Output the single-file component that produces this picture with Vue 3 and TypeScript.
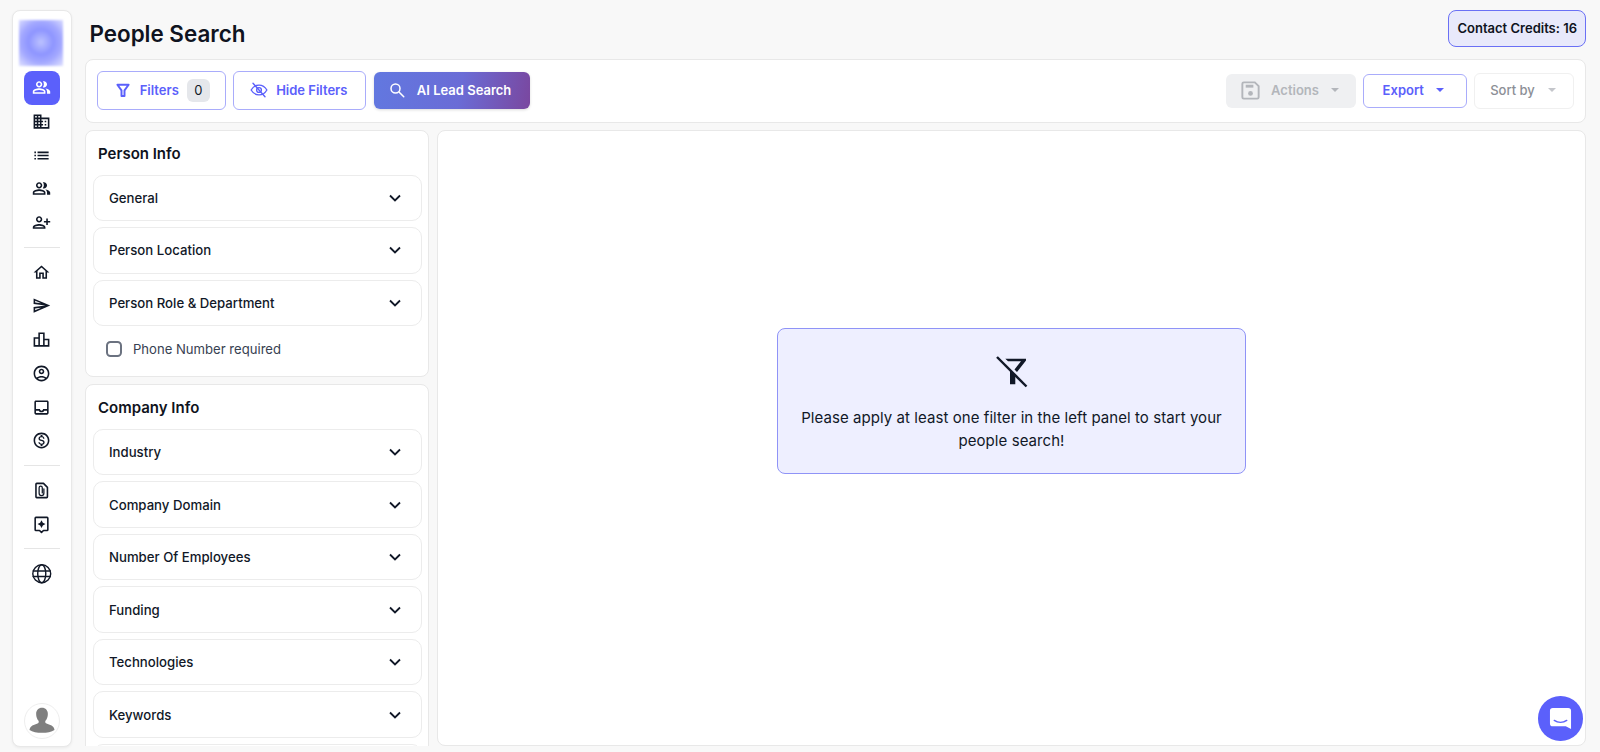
<script setup lang="ts">
interface NavIcon { paths: string[]; flip?: boolean }
const P = {
  people: ['M16.67 13.13C18.04 14.06 19 15.32 19 17v3h4v-3c0-2.18-3.57-3.47-6.33-3.87z','M15 12c2.21 0 4-1.79 4-4s-1.79-4-4-4c-.47 0-.91.1-1.33.24C14.5 5.27 15 6.58 15 8s-.5 2.73-1.33 3.76c.42.14.86.24 1.33.24z','M9 12c2.21 0 4-1.79 4-4s-1.79-4-4-4-4 1.79-4 4 1.79 4 4 4zm0-6c1.1 0 2 .9 2 2s-.9 2-2 2-2-.9-2-2 .9-2 2-2z','M9 13c-2.67 0-8 1.34-8 4v3h16v-3c0-2.66-5.33-4-8-4zm6 5H3v-.99C3.2 16.29 6.3 15 9 15s5.8 1.29 6 2v1z'],
  domain: ['M12 7V3H2v18h20V7H12zM6 19H4v-2h2v2zm0-4H4v-2h2v2zm0-4H4V9h2v2zm0-4H4V5h2v2zm4 12H8v-2h2v2zm0-4H8v-2h2v2zm0-4H8V9h2v2zm0-4H8V5h2v2zm10 12h-8v-2h2v-2h-2v-2h2v-2h-2V9h8v10zm-2-8h-2v2h2v-2zm0 4h-2v2h2v-2z'],
  list: ['M3 13h2v-2H3v2zm0 4h2v-2H3v2zm0-8h2V7H3v2zm4 4h14v-2H7v2zm0 4h14v-2H7v2zM7 7v2h14V7H7z'],
  add: ['M15 12c2.21 0 4-1.79 4-4s-1.79-4-4-4-4 1.79-4 4 1.79 4 4 4zm0-6c1.1 0 2 .9 2 2s-.9 2-2 2-2-.9-2-2 .9-2 2-2zm0 8c-2.67 0-8 1.34-8 4v2h16v-2c0-2.66-5.33-4-8-4zm-6 4c.22-.72 3.31-2 6-2 2.7 0 5.8 1.29 6 2H9zm-3-3v-3h3v-2H6V7H4v3H1v2h3v3h2z'],
  home: ['M12 5.69l5 4.5V18h-2v-6H9v6H7v-7.81l5-4.5M12 3L2 12h3v8h6v-6h2v6h6v-8h3L12 3z'],
  send: ['M4.01 6.03l7.51 3.22-7.52-1 .01-2.22m7.5 8.72L4 17.97v-2.22l7.51-1M2.01 3L2 10l15 2-15 2 .01 7L23 12 2.01 3z'],
  board: ['M16 11V3H8v6H2v12h20V11h-6zm-6-6h4v14h-4V5zm-6 6h4v8H4v-8zm16 8h-4v-6h4v6z'],
  account: ['M12 2C6.48 2 2 6.48 2 12s4.48 10 10 10 10-4.48 10-10S17.52 2 12 2zM7.35 18.5C8.66 17.56 10.26 17 12 17s3.34.56 4.65 1.5c-1.31.94-2.91 1.5-4.65 1.5s-3.34-.56-4.65-1.5zm10.79-1.38C16.45 15.8 14.32 15 12 15s-4.45.8-6.14 2.12C4.7 15.73 4 13.95 4 12c0-4.42 3.58-8 8-8s8 3.58 8 8c0 1.95-.7 3.73-1.86 5.12z','M12 6c-1.93 0-3.5 1.57-3.5 3.5S10.07 13 12 13s3.5-1.57 3.5-3.5S13.93 6 12 6zm0 5c-.83 0-1.5-.67-1.5-1.5S11.17 8 12 8s1.5.67 1.5 1.5S12.83 11 12 11z'],
  inbox: ['M19 3H5c-1.1 0-2 .9-2 2v14c0 1.1.9 2 2 2h14c1.1 0 2-.9 2-2V5c0-1.1-.9-2-2-2zm0 16H5v-3h3.56c.69 1.19 1.97 2 3.45 2s2.75-.81 3.45-2H19v3zm0-5h-4.99c0 1.1-.9 2-2 2s-2-.9-2-2H5V5h14v9z'],
  money: ['M12 2C6.48 2 2 6.48 2 12s4.48 10 10 10 10-4.48 10-10S17.52 2 12 2zm0 18c-4.41 0-8-3.59-8-8s3.59-8 8-8 8 3.59 8 8-3.59 8-8 8zm.31-8.86c-1.77-.45-2.34-.94-2.34-1.67 0-.84.79-1.43 2.1-1.43 1.38 0 1.9.66 1.94 1.64h1.71c-.05-1.34-.87-2.57-2.49-2.97V5H10.9v1.69c-1.51.32-2.72 1.3-2.72 2.81 0 1.79 1.49 2.69 3.66 3.21 1.95.46 2.34 1.15 2.34 1.87 0 .53-.39 1.39-2.1 1.39-1.6 0-2.23-.72-2.32-1.64H8.04c.1 1.7 1.36 2.66 2.86 2.97V19h2.34v-1.67c1.52-.29 2.72-1.16 2.73-2.77-.01-2.2-1.9-2.96-3.66-3.42z'],
}
const groupA: NavIcon[] = [{ paths: P.domain }, { paths: P.list }, { paths: P.people }, { paths: P.add, flip: true }]
const groupB: NavIcon[] = [{ paths: P.home }, { paths: P.send }, { paths: P.board }, { paths: P.account }, { paths: P.inbox }, { paths: P.money }]
const personFilters = ['General', 'Person Location', 'Person Role & Department']
const companyFilters = ['Industry', 'Company Domain', 'Number Of Employees', 'Funding', 'Technologies', 'Keywords']
</script>

<template>
  <div class="page">
    <aside class="sidebar">
      <div class="logo"></div>
      <div class="nav-item active">
        <svg viewBox="0 0 24 24" class="nav-icon"><path v-for="d in P.people" :key="d" :d="d" /></svg>
      </div>
      <div v-for="(ic, i) in groupA" :key="'a' + i" class="nav-item">
        <svg viewBox="0 0 24 24" class="nav-icon" :class="{ flip: ic.flip }"><path v-for="d in ic.paths" :key="d" :d="d" /></svg>
      </div>
      <div class="rule"></div>
      <div v-for="(ic, i) in groupB" :key="'b' + i" class="nav-item">
        <svg viewBox="0 0 24 24" class="nav-icon"><path v-for="d in ic.paths" :key="d" :d="d" /></svg>
      </div>
      <div class="rule"></div>
      <div class="nav-item">
        <svg viewBox="0 0 24 24" class="nav-icon line">
          <path d="M6 3h8.500L19.500 8v12a1 1 0 0 1-1 1H6a1 1 0 0 1-1-1V4a1 1 0 0 1 1-1z" />
          <path class="clip" d="M15 10v5.500a3 3 0 0 1-6 0V8.500a2 2 0 0 1 4 0v6.500" />
        </svg>
      </div>
      <div class="nav-item">
        <svg viewBox="0 0 24 24" class="nav-icon line">
          <path d="M5 3h14a1 1 0 0 1 1 1v14.500a1 1 0 0 1-1 1h-4.500L12 22l-2.500-2.500H5a1 1 0 0 1-1-1V4a1 1 0 0 1 1-1z" />
          <path class="fill" d="M12 6.500l1.700 3.300 3.300 1.700-3.300 1.700-1.700 3.300-1.700-3.300-3.300-1.700 3.300-1.700z" />
        </svg>
      </div>
      <div class="rule"></div>
      <div class="nav-item">
        <svg viewBox="0 0 24 24" class="nav-icon globe line">
          <circle cx="12" cy="12" r="10" />
          <ellipse cx="12" cy="12" rx="4.500" ry="10" />
          <path d="M2.500 9h19M2.500 15h19" />
        </svg>
      </div>
      <div class="avatar">
        <svg viewBox="0 0 36 36" width="36" height="36">
          <path d="M18 4c3.800 0 6.200 2.800 6.200 6.500 0 3-1 5.500-2.500 7.300-.5.800-.4 2 .5 2.700 2 1.200 6 1.900 7.500 3.500 1 1 1.500 2.500 1.500 3.500-3 2-8 3-13.200 3S7.800 29.500 4.800 27.500c0-1 .5-2.500 1.500-3.500 1.500-1.600 5.500-2.300 7.500-3.500.9-.7 1-1.900.5-2.700-1.500-1.800-2.500-4.300-2.500-7.300C11.800 6.800 14.200 4 18 4z" fill="#7f7f7f" />
        </svg>
      </div>
    </aside>

    <main class="main">
      <header class="topbar">
        <h1 class="title">People Search</h1>
        <div class="credits">Contact Credits: 16</div>
      </header>

      <section class="toolbar">
        <div class="tool-group">
          <button class="btn outline filters">
            <svg viewBox="0 0 24 24" width="18" height="18" fill="none" stroke="currentColor" stroke-width="2.600" stroke-linejoin="round"><path d="M4.500 5h15l-5.500 7.500V20h-4v-7.500z" /></svg>
            <span>Filters</span>
            <span class="count">0</span>
          </button>
          <button class="btn outline hide">
            <svg viewBox="0 0 24 24" width="18" height="18" fill="none" stroke="currentColor" stroke-width="1.800" stroke-linecap="round" stroke-linejoin="round"><path d="M1.500 12S5.300 5.500 12 5.500 22.500 12 22.500 12 18.700 18.500 12 18.500 1.500 12 1.500 12z" /><circle cx="12" cy="12" r="3.200" /><path d="M4 3l16 18" /></svg>
            <span>Hide Filters</span>
          </button>
          <button class="btn ai">
            <svg viewBox="0 0 24 24" width="18" height="18" fill="none" stroke="currentColor" stroke-width="2" stroke-linecap="round"><circle cx="10" cy="10" r="6" /><path d="M15 15l6 6" /></svg>
            <span>AI Lead Search</span>
          </button>
        </div>
        <div class="tool-group right">
          <button class="btn actions">
            <svg viewBox="0 0 24 24" width="23" height="23" fill="none" stroke="#b3b6bb" stroke-width="2"><path d="M5 3.500h11.500l4 4V19a1.500 1.500 0 0 1-1.500 1.500H5A1.500 1.500 0 0 1 3.500 19V5A1.500 1.500 0 0 1 5 3.500z" /><path d="M7 7.500h8" stroke-width="3" /><circle cx="12" cy="15" r="2.500" fill="#b3b6bb" stroke="none" /></svg>
            <span>Actions</span>
            <i class="caret"></i>
          </button>
          <button class="btn outline export">
            <span>Export</span>
            <i class="caret"></i>
          </button>
          <button class="btn sort">
            <span>Sort by</span>
            <i class="caret"></i>
          </button>
        </div>
      </section>

      <div class="content">
        <div class="filter-col">
          <section class="card filter-card">
            <h2 class="card-title">Person Info</h2>
            <div v-for="f in personFilters" :key="f" class="accordion">
              <span>{{ f }}</span>
              <svg viewBox="0 0 24 24" width="20" height="20"><path fill="none" stroke="currentColor" stroke-width="2.200" d="M6 9l6 6 6-6" /></svg>
            </div>
            <label class="check"><i class="box"></i><span>Phone Number required</span></label>
          </section>
          <section class="card filter-card">
            <h2 class="card-title">Company Info</h2>
            <div v-for="f in companyFilters" :key="f" class="accordion">
              <span>{{ f }}</span>
              <svg viewBox="0 0 24 24" width="20" height="20"><path fill="none" stroke="currentColor" stroke-width="2.200" d="M6 9l6 6 6-6" /></svg>
            </div>
            <div class="accordion"></div>
          </section>
        </div>
        <section class="card results">
          <div class="empty">
            <svg viewBox="0 0 32 32" width="32" height="32" class="empty-icon">
              <path fill="#111827" d="M9.300 2.700H30v1.800L21 16l-2.500-2.500 6.500-8.200H12zM14 14.500l5.300 6v7.800H14z" />
              <path d="M1 1l29.500 29.500" stroke="#111827" stroke-width="2.400" fill="none" />
            </svg>
            <p>Please apply at least one filter in the left panel to start your people search!</p>
          </div>
        </section>
      </div>
    </main>

    <div class="chat">
      <svg viewBox="0 0 24 24" width="23" height="23"><path fill="#fff" d="M4 1h16a3 3 0 0 1 3 3v19l-5.500-2.800H4a3 3 0 0 1-3-3V4a3 3 0 0 1 3-3z" /><path d="M5.500 14c3.800 2.600 9.200 2.600 13 0" fill="none" stroke="#5b60fb" stroke-width="1.500" stroke-linecap="round" /></svg>
    </div>
  </div>
</template>

<style>
html, body { margin: 0; background: #f8f8f8; overflow: hidden; }
</style>

<style scoped>
.page {
  display: flex;
  gap: 13.500px;
  height: 752px;
  padding: 10px 14px 5px 12px;
  box-sizing: border-box;
  overflow: hidden;
  font-family: Inter, "Liberation Sans", sans-serif;
  color: #111827;
  position: relative;
  background: #f8f8f8;
}
.sidebar {
  width: 59.500px;
  flex: none;
  box-sizing: border-box;
  background: #fff;
  border: 1px solid #e8e8e8;
  border-radius: 8px;
  box-shadow: 0 1px 3px rgba(0, 0, 0, 0.06);
  display: flex;
  flex-direction: column;
  align-items: center;
  padding-top: 9px;
}
.logo {
  width: 44px;
  height: 46px;
  flex: none;
  margin: 0 1.500px 5px 0;
  background: radial-gradient(circle at 50% 48%, #bcc2ff 0, #8e95ff 38%, #a3a8ff 62%, #e0e2ff 100%);
  filter: blur(1px);
}
.nav-item {
  width: 36px;
  height: 33.700px;
  flex: none;
  display: flex;
  align-items: center;
  justify-content: center;
  border-radius: 8px;
  color: #111827;
}
.nav-item.active { background: #5b60fb; color: #fff; }
.nav-icon { width: 19px; height: 19px; fill: currentColor; }
.nav-icon.flip { transform: scaleX(-1); }
.nav-icon.line { fill: none; stroke: currentColor; stroke-width: 2; stroke-linejoin: round; stroke-linecap: round; }
.nav-icon.line .fill { fill: currentColor; stroke: none; }
.nav-icon.line .clip { stroke-width: 1.600; }
.nav-icon.globe { width: 21.500px; height: 21.500px; stroke-width: 1.600; }
.rule { width: 36px; height: 1px; flex: none; background: #e5e5e5; margin: 7.500px 0; }
.avatar {
  margin-top: auto;
  margin-bottom: 7px;
  width: 36px;
  height: 36px;
  border-radius: 50%;
  border: 1px solid #eee;
  box-sizing: border-box;
  overflow: hidden;
  display: flex;
  align-items: center;
  justify-content: center;
}
.main { flex: 1; min-width: 0; display: flex; flex-direction: column; margin-bottom: 1.500px; }
.topbar {
  height: 48.500px;
  flex: none;
  display: flex;
  justify-content: space-between;
  align-items: flex-start;
}
.title { margin: 9px 0 0 4.500px; font-size: 22.400px; line-height: 29px; font-weight: 600; color: #0f1320; }
.credits {
  height: 36.500px;
  box-sizing: border-box;
  display: flex;
  align-items: center;
  padding: 0 8px;
  background: #e8e9fb;
  border: 1px solid #6a70f5;
  border-radius: 8px;
  font-size: 13px;
  font-weight: 600;
  color: #0f1320;
}
.toolbar {
  height: 64px;
  flex: none;
  box-sizing: border-box;
  background: #fff;
  border: 1px solid #e8e8e8;
  border-radius: 8px;
  display: flex;
  align-items: center;
  justify-content: space-between;
  padding: 0 11px;
}
.tool-group { display: flex; align-items: center; gap: 7.600px; }
.tool-group.right { gap: 7.500px; }
.btn {
  box-sizing: border-box;
  display: flex;
  align-items: center;
  justify-content: center;
  font-family: inherit;
  font-size: 13px;
  font-weight: 600;
  border-radius: 6px;
  background: #fff;
  border: 1px solid transparent;
  padding: 0 0 1px;
}
.outline { border-color: #a9acfb; color: #5b60fb; }
.filters { width: 128.500px; height: 39px; gap: 8px; padding-left: 1px; }
.count {
  width: 23px;
  height: 23px;
  background: #e5e7eb;
  border-radius: 6px;
  color: #111827;
  font-weight: 400;
  font-size: 13px;
  display: flex;
  align-items: center;
  justify-content: center;
}
.hide { width: 133.400px; height: 39px; gap: 8px; padding-right: 2px; }
.ai {
  width: 156px;
  height: 37.500px;
  gap: 11px;
  color: #fff;
  border: none;
  background: linear-gradient(100deg, #6278e0 0%, #6a6cd6 55%, #7a479f 100%);
  box-shadow: 0 1px 3px rgba(0, 0, 0, 0.15);
  padding-right: 5px;
}
.actions { width: 130px; height: 34px; gap: 9px; background: #eff0f2; color: #b3b6bb; padding-right: 3px; }
.actions .caret { margin-left: 3px; }
.export { width: 103.500px; height: 34px; gap: 12px; padding-right: 3px; }
.sort { width: 100px; height: 36px; gap: 13px; color: #8c8f96; border-color: #f0f0f0; font-weight: 500; padding-right: 2px; }
.caret {
  width: 0;
  height: 0;
  border-left: 4.500px solid transparent;
  border-right: 4.500px solid transparent;
  border-top: 4.500px solid currentColor;
}
.sort .caret { color: #c4c6cb; }
.content { flex: 1; min-height: 0; display: flex; gap: 8px; margin-top: 7.500px; }
.filter-col { width: 344px; flex: none; display: flex; flex-direction: column; gap: 7.500px; overflow: hidden; }
.card {
  box-sizing: border-box;
  background: #fff;
  border: 1px solid #e8e8e8;
  border-radius: 8px;
}
.filter-card { padding: 0 6px 6px 6.500px; flex: none; }
.card-title { margin: 0; padding: 12.500px 6px 11px 5.500px; font-size: 15px; line-height: 20px; font-weight: 600; color: #0f1320; height: 43.700px; box-sizing: border-box; }
.accordion {
  height: 46.500px;
  flex: none;
  box-sizing: border-box;
  margin-bottom: 6px;
  border: 1px solid #ececec;
  border-radius: 10px;
  display: flex;
  align-items: center;
  justify-content: space-between;
  padding: 0 16px 0 15.500px;
  font-size: 13.200px;
  font-weight: 550;
  color: #111827;
}
.check {
  display: flex;
  align-items: center;
  gap: 11px;
  height: 34px;
  margin-bottom: 3.500px;
  padding-left: 13px;
  font-size: 13.100px;
  color: #374151;
}
.box { width: 16.500px; height: 16.500px; box-sizing: border-box; border: 2px solid #6b7280; border-radius: 4.500px; }
.results {
  flex: 1;
  min-width: 0;
  display: flex;
  align-items: center;
  justify-content: center;
  padding-bottom: 74px;
}
.empty {
  width: 469px;
  height: 146px;
  box-sizing: border-box;
  background: #eeefff;
  border: 1px solid #8f93f7;
  border-radius: 8px;
  display: flex;
  flex-direction: column;
  align-items: center;
  padding: 27px 20px 0;
}
.empty-icon { flex: none; }
.empty p {
  margin: 18px 0 0;
  font-size: 15px;
  letter-spacing: 0.065px;
  line-height: 23px;
  font-weight: 400;
  color: #111827;
  text-align: center;
}
.chat {
  position: absolute;
  left: 1538px;
  top: 696px;
  width: 44.500px;
  height: 44.500px;
  border-radius: 50%;
  background: #5b60fb;
  display: flex;
  align-items: center;
  justify-content: center;
}
</style>
